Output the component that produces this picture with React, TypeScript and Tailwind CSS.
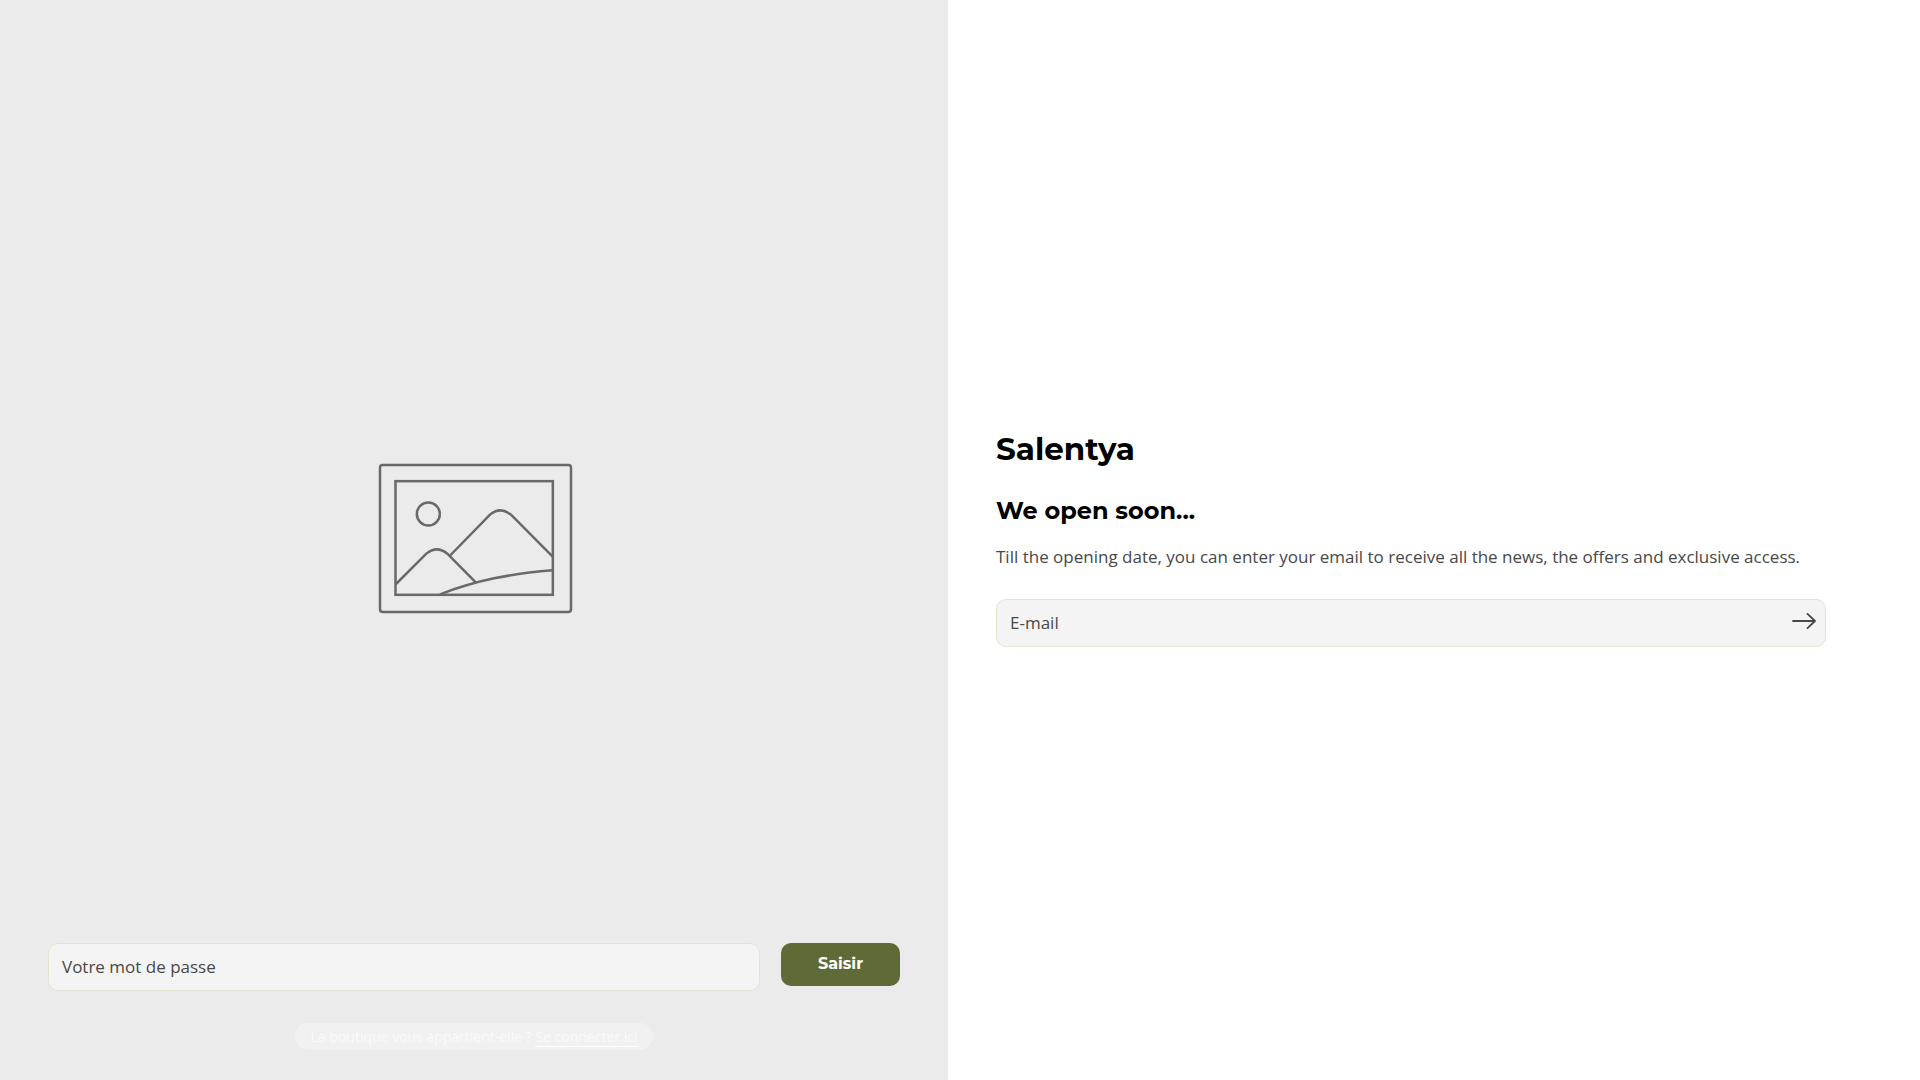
import { useState } from 'react';

const PlaceholderImage = () => (
  <svg
    className="w-[230px] h-[180px] col-start-1 row-start-1 place-self-center"
    viewBox="-3 0 690 540"
    fill="none"
    stroke="#696969"
    strokeWidth="7.500"
    aria-hidden="true"
  >
    <rect x="60" y="45" width="573" height="441" rx="8" />
    <rect x="106.500" y="93.500" width="472" height="341" />
    <circle cx="205" cy="192" r="34.500" />
    <path d="M108 402L199 311Q230 285 262 311L348 398" />
    <path d="M269 318L390 194Q420 168 453 194L578 320" />
    <path d="M240 433C350 391 450 371 578 361" />
  </svg>
);

const ArrowIcon = () => (
  <svg className="w-6 h-4" viewBox="0 0 24 16" fill="none" stroke="#484848" strokeWidth="1.800" strokeLinecap="round" strokeLinejoin="round" aria-hidden="true">
    <path d="M1 8H23M15.500 0.900L23 8L15.500 15.100" />
  </svg>
);

interface FieldProps {
  id: string;
  type: string;
  label: string;
}

// The label sits inside the box until something is typed
const Field = ({ id, type, label }: FieldProps) => {
  const [value, setValue] = useState('');

  return (
    <div className="relative flex-1">
      <input
        id={id}
        type={type}
        placeholder=" "
        value={value}
        onChange={(e) => setValue(e.target.value)}
        className="peer block w-full h-12 px-[14px] rounded-[10px] border border-[#e3e5d2] bg-[#f4f4f4] text-[17px] text-[#484848] outline-none focus:border-[#5e6b36]"
      />
      <label
        htmlFor={id}
        className="absolute left-[14px] inset-y-0 hidden peer-placeholder-shown:flex items-center text-[17px] text-[#484848] cursor-text"
      >
        {label}
      </label>
    </div>
  );
};

const PasswordPanel = () => (
  <section className="w-[948px] max-w-1/2 min-h-screen shrink-0 grid bg-[#ebebeb]">
    <PlaceholderImage />
    <div className="col-start-1 row-start-1 self-end px-12 pb-[30px]">
      <form className="flex items-start gap-[21px]" onSubmit={(e) => e.preventDefault()}>
        <Field id="password" type="password" label="Votre mot de passe" />
        <button
          type="submit"
          className="w-[119px] h-[43px] pb-[2px] shrink-0 rounded-[10px] bg-[#5e6b36] text-base font-bold text-white font-['Montserrat','Open_Sans',sans-serif]"
        >
          Saisir
        </button>
      </form>
      <div className="mt-8 flex justify-center">
        <p className="px-4 rounded-full bg-[#f1f1f1] text-sm leading-[27px] text-[#fafafa]">
          La boutique vous appartient-elle ?{' '}
          <a href="#login" className="underline underline-offset-4 decoration-white">Se connecter ici</a>
        </p>
      </div>
    </div>
  </section>
);

const NewsletterPanel = () => (
  <section className="flex-1 min-w-0 min-h-screen flex flex-col justify-center pl-12 pr-[94px] bg-white">
    <h1 className="text-[31px] leading-10 font-bold text-black font-['Montserrat','Open_Sans',sans-serif]">Salentya</h1>
    <h2 className="mt-[26px] text-2xl leading-8 font-bold text-black font-['Montserrat','Open_Sans',sans-serif]">We open soon...</h2>
    <p className="mt-4 text-[17px] leading-7 text-[#484848]">
      Till the opening date, you can enter your email to receive all the news, the offers and exclusive access.
    </p>
    <form className="relative flex mt-7 mb-1" onSubmit={(e) => e.preventDefault()}>
      <Field id="email" type="email" label="E-mail" />
      <button type="submit" aria-label="S'inscrire" className="absolute right-0 top-0 w-11 h-11 flex items-center justify-center">
        <ArrowIcon />
      </button>
    </form>
  </section>
);

export default function App() {
  return (
    <main className="min-h-screen flex font-['Open_Sans','Noto_Sans',sans-serif]">
      <PasswordPanel />
      <NewsletterPanel />
    </main>
  );
}
